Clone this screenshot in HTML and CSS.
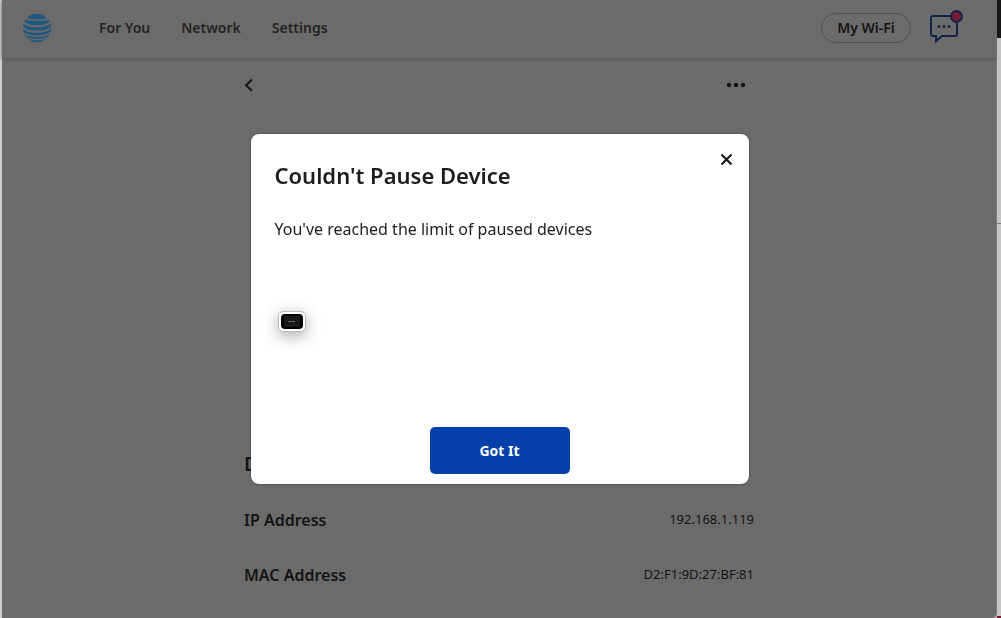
FILE: index.html
```html
<!DOCTYPE html>
<html lang="en">
<head>
<meta charset="utf-8">
<title>Device details</title>
<meta name="viewport" content="width=device-width, initial-scale=1">
<link rel="stylesheet" href="styles.css">
</head>
<body>
<div class="desktop">
  <div class="window">
    <header class="topbar">
      <a class="logo" href="#" aria-label="AT&amp;T home">
        <svg width="30" height="30" viewBox="0 0 30 30">
          <circle cx="15" cy="15" r="14.2" fill="#22587d"/>
          <g fill="none" stroke="#6b6b6b">
            <path d="M4 1C4 8.500 10 7 15 7S26 8.500 26 1" stroke-width="1.500"/>
            <path d="M3.500 2.500C3 5.500 5 6.800 7.500 6.800M26.500 2.500C27 5.500 25 6.800 22.500 6.800" stroke-width="1.400"/>
            <path d="M0 7.500C3 12.500 9 13.200 15 13.200S27 12.500 30 7.500" stroke-width="2"/>
            <path d="M0 13.500C3 18 9 18.800 15 18.800S27 18 30 13.500" stroke-width="1.900"/>
            <path d="M0 18.500C3 22.400 9 23.200 15 23.200S27 22.400 30 18.500" stroke-width="1.500"/>
            <path d="M2 23.300C6 26 10 26.600 15 26.600S24 26 28 23.300" stroke-width="1.100"/>
          </g>
        </svg>
      </a>
      <nav class="nav">
        <a href="#">For You</a>
        <a href="#">Network</a>
        <a href="#">Settings</a>
      </nav>
      <button class="wifi" type="button">My Wi-Fi</button>
      <button class="chat" type="button" aria-label="Messages">
        <svg width="36" height="36" viewBox="0 0 36 36">
          <path d="M4 7h22a2 2 0 0 1 2 2v16a2 2 0 0 1-2 2H13l-6 5v-5H4a2 2 0 0 1-2-2V9a2 2 0 0 1 2-2z" fill="none" stroke="#102448" stroke-width="2"/>
          <g fill="#102448"><circle cx="10" cy="17.500" r="1.500"/><circle cx="15" cy="17.500" r="1.500"/><circle cx="20" cy="17.500" r="1.500"/></g>
          <circle cx="27.500" cy="7.500" r="5.500" fill="#711d36" stroke="#18234a" stroke-width="2"/>
        </svg>
      </button>
    </header>
    <main class="details">
      <div class="toolbar">
        <button type="button" aria-label="Back">
          <svg width="10" height="14" viewBox="0 0 10 14"><path d="M8 1.500 2 7.200l6 5.600" fill="none" stroke="#141414" stroke-width="2"/></svg>
        </button>
        <button type="button" aria-label="More options">
          <svg width="20" height="6" viewBox="0 0 20 6" fill="#141414"><circle cx="3" cy="3" r="2.200"/><circle cx="10" cy="3" r="2.200"/><circle cx="17" cy="3" r="2.200"/></svg>
        </button>
      </div>
      <h2 class="section">Device Details</h2>
      <dl class="facts">
        <div class="fact"><dt>IP Address</dt><dd>192.168.1.119</dd></div>
        <div class="fact"><dt>MAC Address</dt><dd>D2:F1:9D:27:BF:81</dd></div>
      </dl>
    </main>
  </div>
  <div class="rail">
    <div class="rail-top"></div>
    <div class="rail-upper"></div>
    <div class="rail-lower"></div>
  </div>
</div>
<div class="overlay">
  <section class="modal" role="dialog" aria-modal="true" aria-labelledby="modal-title">
    <button class="close" type="button" aria-label="Close">
      <svg width="13" height="13" viewBox="0 0 13 13"><path d="m1.500 1.500 10 10m0-10-10 10" stroke="#1d1d1d" stroke-width="2.200"/></svg>
    </button>
    <h1 id="modal-title">Couldn't Pause Device</h1>
    <p>You've reached the limit of paused devices</p>
    <div class="thumb">
      <svg width="22" height="15" viewBox="0 0 22 15">
        <rect width="22" height="15" rx="4"/>
        <rect x="3" y="2" width="16" height="11" rx="1" fill="#181818"/>
        <path d="M7.500 7.500h2m.5 0h1.500m.5 0h1m.5 0h.5" stroke="#888" stroke-width="1"/>
      </svg>
    </div>
    <button class="confirm" type="button">Got It</button>
  </section>
</div>
</body>
</html>
```
FILE: styles.css
```css
* { box-sizing: border-box; }
body {
  margin: 0;
  font-family: "Noto Sans", "Open Sans", sans-serif;
  color: #141414;
}
button {
  padding: 0;
  border: 0;
  background: none;
  font: inherit;
  color: inherit;
  cursor: pointer;
}
svg { display: block; }
.desktop {
  display: flex;
  min-height: 100vh;
  padding-left: 2px;
  background: linear-gradient(90deg, #d2cdd0 50%, #b5b5b5 50%);
}
.window {
  flex: 1;
  background: #6b6b6b;
  border-right: 1px solid #7c7c7c;
  border-bottom-right-radius: 5px;
}
.rail {
  display: flex;
  flex-direction: column;
  width: 4px;
}
.rail-top { height: 38px; background: #171717; }
.rail-upper { height: 186px; border-bottom: 1px solid #7f7f7f; background: #c3c3c3; }
.rail-lower { flex: 1; border-bottom: 2px solid #7b1730; background: #c5c5c5; }
.topbar {
  display: flex;
  align-items: center;
  height: 58px;
  padding: 0 31px 2px 20px;
  box-shadow: 0 1px 3px #555;
}
.nav {
  display: flex;
  flex: 1;
  gap: 31px;
  margin-left: 47px;
}
.nav a {
  font-size: 14px;
  line-height: 20px;
  font-weight: 600;
  color: #242424;
  text-decoration: none;
}
.wifi {
  width: 90px;
  height: 30px;
  margin-right: 18px;
  padding-bottom: 2px;
  border: 1px solid #505050;
  border-radius: 15px;
  font-size: 14px;
  font-weight: 600;
}
.chat { padding-bottom: 2px; }
.details {
  width: 510px;
  max-width: 90%;
  margin: 0 auto;
}
.toolbar {
  display: flex;
  align-items: center;
  justify-content: space-between;
  padding: 20px 8px 0 0;
}
.section {
  margin: 360px 0 0;
  font-size: 20px;
  line-height: 24px;
  font-weight: 600;
}
.facts {
  display: grid;
  gap: 31px;
  margin: 32px 0 0;
}
.fact {
  display: flex;
  justify-content: space-between;
  line-height: 24px;
}
.fact dt { font-size: 16px; font-weight: 600; }
.fact dd { margin: 0; font-size: 13px; line-height: 22px; }
.overlay {
  position: fixed;
  inset: 0;
  display: grid;
  place-items: center;
  padding-right: 2px;
}
.modal {
  display: flex;
  flex-direction: column;
  align-items: flex-start;
  width: 498px;
  max-width: 94%;
  min-height: 350px;
  padding: 27px 24px 10px;
  border-radius: 8px;
  background: #fff;
  box-shadow: 0 0 2px #333;
  color: #1d1d1d;
  position: relative;
}
.close {
  position: absolute;
  top: 19px;
  right: 16px;
}
.modal h1 {
  margin: 0;
  font-size: 22px;
  line-height: 28px;
  font-weight: 600;
}
.modal p {
  margin: 28px 0 0;
  font-size: 16px;
  line-height: 24px;
}
.thumb {
  margin: 70px 0 0 3px;
  padding: 2px;
  border: 1px solid #bbb;
  border-radius: 5px;
  background: #fff;
  box-shadow: 0 4px 16px #aaa;
}
.confirm {
  align-self: center;
  width: 140px;
  height: 47px;
  margin-top: auto;
  border-radius: 5px;
  background: #0640ab;
  color: #fff;
  font-size: 14px;
  font-weight: 700;
}
```
